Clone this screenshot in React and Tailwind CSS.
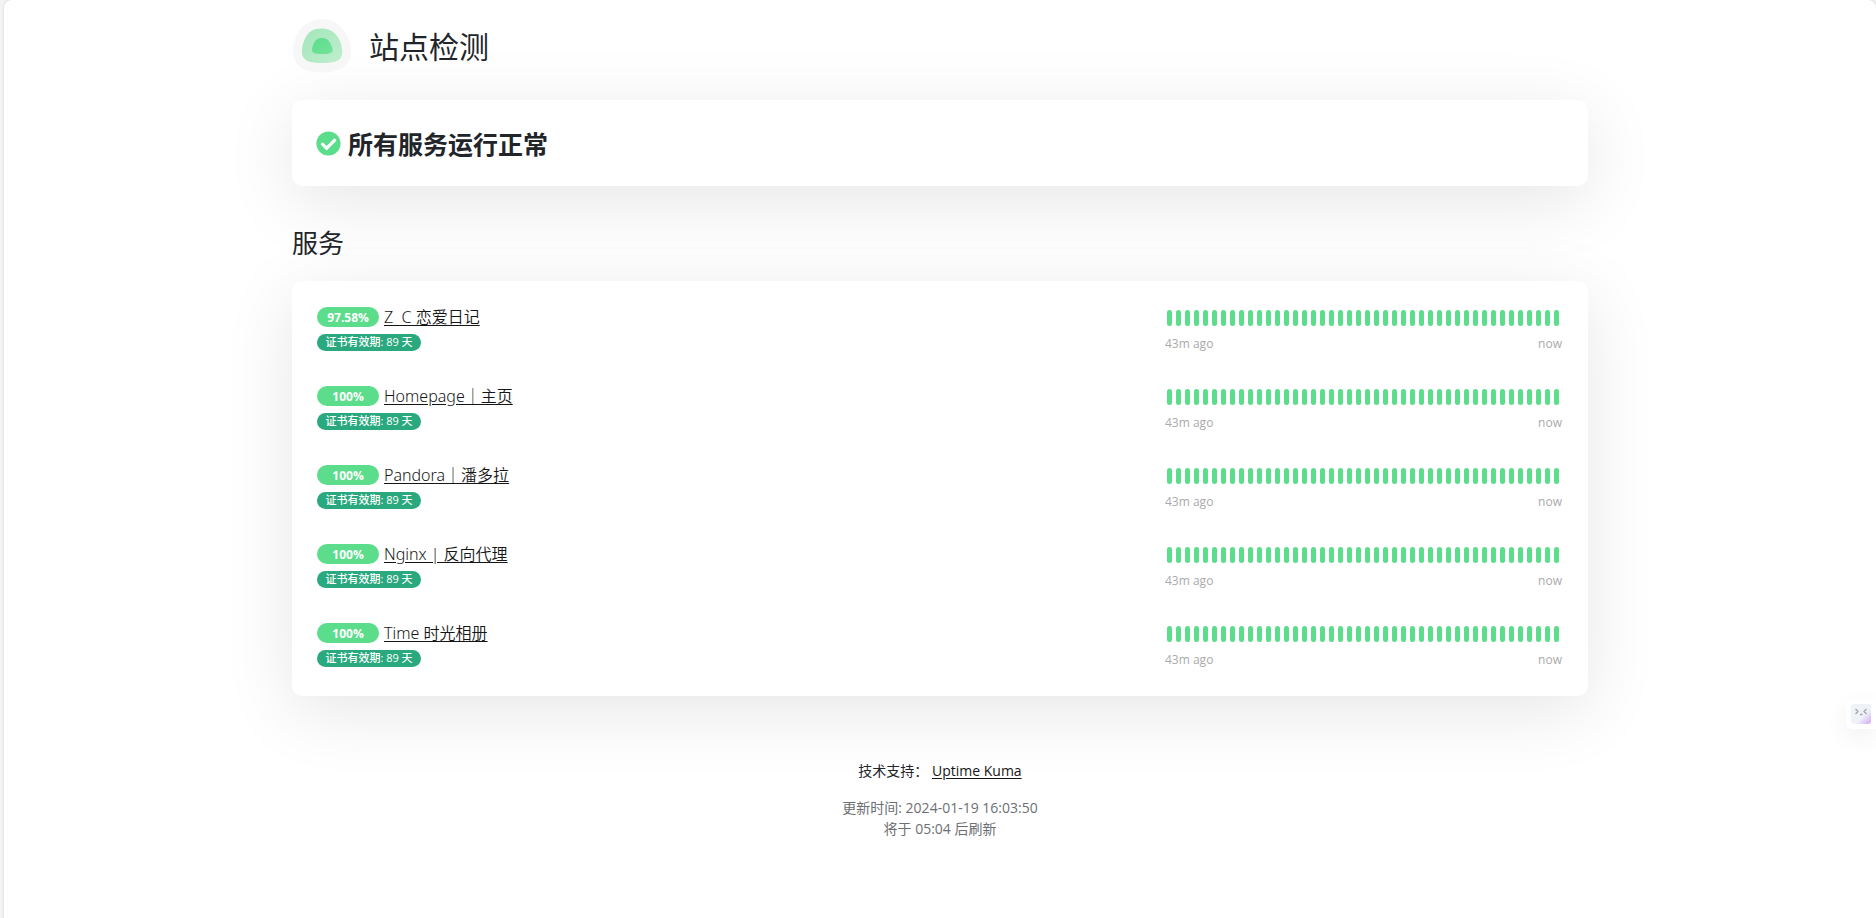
import React from 'react';

const BEAT_COUNT = 44;

const services = [
  { name: 'Z  C 恋爱日记', uptime: '97.58%', days: 89 },
  { name: 'Homepage｜主页', uptime: '100%', days: 89 },
  { name: 'Pandora｜潘多拉', uptime: '100%', days: 89 },
  { name: 'Nginx | 反向代理', uptime: '100%', days: 89 },
  { name: 'Time 时光相册', uptime: '100%', days: 89 },
];

const Logo = () => (
  <svg className="h-14 w-15" viewBox="0 0 60 56" fill="none" aria-hidden="true">
    <defs>
      <linearGradient id="logo-green" x1="0" y1="0" x2="1" y2="1">
        <stop offset="0" stopColor="#5cdd8b" />
        <stop offset="1" stopColor="#74e39b" />
      </linearGradient>
      <linearGradient id="logo-soft" x1="0" y1="0" x2="1" y2="1">
        <stop offset="0" stopColor="#a3e6bb" />
        <stop offset="1" stopColor="#bfeecd" />
      </linearGradient>
    </defs>
    <path d="M30 1C45 1 59 15 59 33C59 49 45 54.500 30 54.500C14 54.500 1 49 1 33C1 15 14 1 30 1Z" fill="#f7f7f7" />
    <path d="M29.500 10.500C41 10.500 46.500 18 49 26C50.500 31 51 36 49 39.500C46.500 44 39 45 29.500 45C20 45 13.500 43.500 11 39C9 35 10 28 12 23C15 15 20 10.500 29.500 10.500Z" fill="url(#logo-soft)" />
    <path d="M30 20C36 20 38 24 39.500 28C40.500 31 41.500 33.500 39.500 34.500C36 36.500 25 36.500 21 34.500C19.500 33 20 29 21.500 26C23.500 22 25.500 20 30 20Z" fill="url(#logo-green)" />
  </svg>
);

const CheckCircle = () => (
  <svg className="h-[25px] w-[25px]" viewBox="0 0 512 512" aria-hidden="true">
    <path
      fill="#5cdd8b"
      d="M504 256c0 136.967-111.033 248-248 248S8 392.967 8 256 119.033 8 256 8s248 111.033 248 248zM227.314 387.314l184-184c6.248-6.248 6.248-16.379 0-22.627l-22.627-22.627c-6.248-6.249-16.379-6.249-22.628 0L216 308.118l-70.059-70.059c-6.248-6.248-16.379-6.248-22.628 0l-22.627 22.627c-6.248 6.248-6.248 16.379 0 22.627l104 104c6.249 6.249 16.379 6.249 22.628.001z"
    />
  </svg>
);

const HeartbeatBar = () => (
  <div className="w-[397px] shrink-0">
    <div className="mt-[5px] flex gap-1 px-0.5">
      {Array.from({ length: BEAT_COUNT }, (_, i) => (
        <div key={i} className="h-4 w-[5px] shrink-0 rounded-full bg-[#5cdd8b]" />
      ))}
    </div>
    <div className="mt-2.5 flex justify-between text-[12px] leading-4 text-[#aaaaaa]">
      <span>43m ago</span>
      <span>now</span>
    </div>
  </div>
);

const ServiceRow = ({ service }) => (
  <li className="flex h-[79px] items-start justify-between pt-1 pr-1.5 pl-[5px]">
    <div>
      <div className="flex h-6 items-center gap-[5px]">
        <span className="h-5 w-[62px] rounded-full bg-[#5cdd8b] text-center text-[12px] leading-[21px] font-bold text-white">
          {service.uptime}
        </span>
        <a href="#" className="font-['Noto_Sans','Noto_Sans_CJK_SC',sans-serif] text-[16px] leading-6 font-[350] whitespace-pre text-[#161616] underline underline-offset-2">
          {service.name}
        </a>
      </div>
      <div className="mt-[5px] h-[17px] w-[104px] rounded-full bg-[#2aa87e] text-center text-[11px] leading-4 font-medium text-white">
        证书有效期: {service.days} 天
      </div>
    </div>
    <HeartbeatBar />
  </li>
);

// Small helper button docked to the right edge of the window
const DockButton = () => (
  <button
    type="button"
    aria-label="Assistant"
    className="fixed top-[699px] right-0 rounded-l-md bg-white p-[5px] shadow-[0_8px_24px_rgba(0,0,0,0.06)]"
  >
    <svg className="h-5 w-5" viewBox="0 0 20 20" fill="none" aria-hidden="true">
      <defs>
        <linearGradient id="dock-face" x1="0" y1="0" x2="1" y2="1">
          <stop offset="0.6" stopColor="#eff3f8" />
          <stop offset="1" stopColor="#d3a8f5" />
        </linearGradient>
      </defs>
      <rect width="20" height="20" rx="3" fill="url(#dock-face)" />
      <path d="M4.500 5L7 7.500L4.500 10M15.500 5L13 7.500L15.500 10M9 10.500H11.500" stroke="#a0a4aa" strokeWidth="1.300" />
    </svg>
  </button>
);

const App = () => (
  <div className="min-h-screen bg-[#f3f3f3] pl-1 font-['Open_Sans','Noto_Sans_CJK_SC',sans-serif] text-[#212529]">
    <div className="min-h-screen rounded-t-lg bg-white shadow-[0_0_3px_rgba(0,0,0,0.15)]">
      <main className="mx-auto max-w-[1296px] pt-[18px]">
        <header className="flex items-center gap-[17px]">
          <Logo />
          <h1 className="pt-0.5 text-[30px] leading-9">站点检测</h1>
        </header>

        <section className="mt-[26px] flex h-[86px] items-center gap-[7px] rounded-[10px] bg-white px-6 shadow-[0_15px_70px_rgba(0,0,0,0.1)]">
          <CheckCircle />
          <span className="pt-0.5 text-[25px] leading-9 font-bold">所有服务运行正常</span>
        </section>

        <h2 className="mt-[41px] text-[26px] leading-8">服务</h2>

        <ul className="mt-[22px] rounded-[10px] bg-white p-5 pb-0 shadow-[0_15px_70px_rgba(0,0,0,0.1)]">
          {services.map((service) => (
            <ServiceRow key={service.name} service={service} />
          ))}
        </ul>

        <footer className="mt-16 pb-20 text-center text-[14px] leading-[21px]">
          <p>
            技术支持：{' '}
            <a href="#" className="text-[#161616] underline underline-offset-2">Uptime Kuma</a>
          </p>
          <div className="mt-4 text-[#6c6f73]">
            <p>更新时间: 2024-01-19 16:03:50</p>
            <p>将于 05:04 后刷新</p>
          </div>
        </footer>
      </main>
    </div>
    <DockButton />
  </div>
);

export default App;
